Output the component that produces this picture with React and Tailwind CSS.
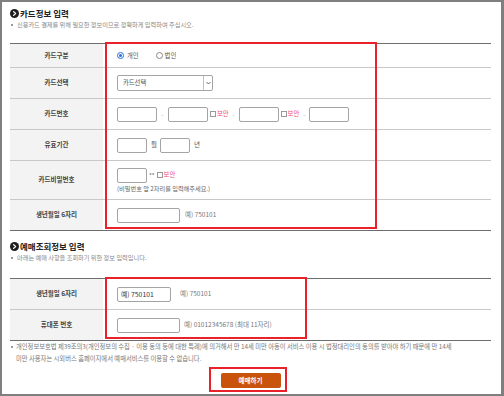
import React from "react";

const F = "font-['Noto_Sans_CJK_KR','Noto_Sans',sans-serif]";

function TitleIcon() {
  return (
    <svg width="9" height="9" viewBox="0 0 9 9" className="shrink-0">
      <circle cx="4.5" cy="4.5" r="4.5" fill="#1e1e1e" />
      <path d="M3.6 2.6 L5.6 4.5 L3.6 6.4" stroke="#fff" strokeWidth="1.3" fill="none" strokeLinecap="round" strokeLinejoin="round" />
    </svg>
  );
}

function Section({ title, sub }) {
  return (
    <>
      <div className="flex items-center h-[12px] gap-[1px]">
        <TitleIcon />
        <span className="text-[8.5px] leading-[12px] font-bold text-[#222]">{title}</span>
      </div>
      <div className="flex items-center h-[12px] text-[6.2px] leading-[12px] text-[#888]">
        <span className="w-[2px] h-[2px] bg-[#999] ml-[1px] mr-[4px]" />
        <span>{sub}</span>
      </div>
    </>
  );
}

function Row({ label, h, last, children }) {
  return (
    <div className={`flex ${last ? "" : "border-b border-[#c8c8c8]"}`} style={{ height: h }}>
      <div className="w-[93px] shrink-0 bg-[#f3f3f3] flex items-center justify-center text-[6.5px] font-bold text-[#444]">
        {label}
      </div>
      <div className="flex-1 pl-[14px] flex items-center text-[6.5px] text-[#555]">{children}</div>
    </div>
  );
}

function Input({ w, children }) {
  return (
    <div
      className="h-[15px] border border-[#a4a4a4] rounded-[2px] bg-white flex items-center pl-[3px] text-[6.8px] text-[#333] shrink-0"
      style={{ width: w }}
    >
      {children}
    </div>
  );
}

function Secure() {
  return (
    <span className="flex items-center ml-[2px]">
      <span className="w-[6px] h-[6px] border border-[#999] bg-white mr-[1px]" />
      <span className="text-[#f04a78] text-[6.3px]">보안</span>
    </span>
  );
}

export default function App() {
  return (
    <div className={`relative w-[504px] h-[396px] bg-white border-t-2 border-l-2 border-b-2 border-r-[3px] border-[#7f7f7f] ${F}`}>
      <div className="pl-[8px] pr-[10px] pt-[5px]">
        <Section title="카드정보 입력" sub="신용카드 결제를 위해 필요한 정보이므로 정확하게 입력하여 주십시오." />

        <div className="mt-[12px] border-t border-b border-[#6e6e6e]">
          <Row label="카드구분" h={24}>
            <span className="w-[7px] h-[7px] rounded-full border border-[#2a6ad8] flex items-center justify-center">
              <span className="w-[3px] h-[3px] rounded-full bg-[#2a6ad8]" />
            </span>
            <span className="ml-[3px] text-[6.3px]">개인</span>
            <span className="ml-[17px] w-[7px] h-[7px] rounded-full border border-[#888]" />
            <span className="ml-[2px] text-[6.3px]">법인</span>
          </Row>
          <Row label="카드선택" h={31}>
            <div className="w-[96px] h-[16px] border border-[#a4a4a4] rounded-[2px] flex items-stretch">
              <span className="flex-1 flex items-center pl-[5px] text-[6.3px] text-[#555]">카드선택</span>
              <span className="w-[9px] border-l border-[#c0c0c0] flex items-center justify-center">
                <svg width="5" height="4" viewBox="0 0 5 4">
                  <path d="M0.5 1 L2.5 3 L4.5 1" stroke="#555" strokeWidth="0.9" fill="none" />
                </svg>
              </span>
            </div>
          </Row>
          <Row label="카드번호" h={31}>
            <Input w={40} />
            <span className="w-[11px] text-center text-[#999] text-[6px]">-</span>
            <Input w={40} />
            <Secure />
            <span className="w-[10px] text-center text-[#999] text-[6px]">-</span>
            <Input w={40} />
            <Secure />
            <span className="w-[10px] text-center text-[#999] text-[6px]">-</span>
            <Input w={40} />
          </Row>
          <Row label="유효기간" h={31}>
            <Input w={30} />
            <span className="ml-[4px] w-[9px]">월</span>
            <Input w={30} />
            <span className="ml-[4px]">년</span>
          </Row>
          <Row label="카드비밀번호" h={39}>
            <div className="flex flex-col">
              <div className="flex items-center">
                <Input w={30} />
                <span className="ml-[2px] text-[6px] text-[#666]">**</span>
                <Secure />
              </div>
              <div className="text-[6.2px] leading-[9px] mt-[1px] text-[#666]">(비밀번호 앞 2자리를 입력해주세요.)</div>
            </div>
          </Row>
          <Row label="생년월일 6자리" h={30} last>
            <Input w={63} />
            <span className="ml-[5px] text-[#777]">예) 750101</span>
          </Row>
        </div>

        <div className="mt-[9px]">
          <Section title="예매조회정보 입력" sub="아래는 예매 사항을 조회하기 위한 정보 입력입니다." />
        </div>

        <div className="mt-[14px] border-t border-b border-[#6e6e6e]">
          <Row label="생년월일 6자리" h={31}>
            <Input w={54}>예) 750101</Input>
            <span className="ml-[9px] text-[#777]">예) 750101</span>
          </Row>
          <Row label="휴대폰 번호" h={30} last>
            <Input w={63} />
            <span className="ml-[4px] text-[#777]">예) 01012345678 (최대 11자리)</span>
          </Row>
        </div>

        <div className="flex text-[6.3px] leading-[12px] text-[#777] whitespace-nowrap">
          <span className="w-[2px] h-[2px] bg-[#999] ml-[1px] mr-[3px] mt-[5px] shrink-0" />
          <span>
            개인정보보호법 제39조의3(개인정보의 수집 · 이용 동의 등에 대한 특례)에 의거해서 만 14세 미만 아동이 서비스 이용 시 법정대리인의 동의를 받아야 하기 때문에 만 14세
            <br />
            미만 사용자는 시외버스 홈페이지에서 예매서비스를 이용할 수 없습니다.
          </span>
        </div>

        <div className="flex justify-center mt-[8px]">
          <button className="w-[60px] h-[15px] rounded-[2px] bg-[#c9520c] text-white text-[6.5px] font-bold flex items-center justify-center">
            예매하기
          </button>
        </div>
      </div>

      <div className="absolute left-[103px] top-[40px] w-[272px] h-[187px] border-2 border-[#e8212a] pointer-events-none" />
      <div className="absolute left-[103px] top-[275px] w-[202px] h-[62px] border-2 border-[#e8212a] pointer-events-none" />
      <div className="absolute left-[207px] top-[365px] w-[78px] h-[25px] border-2 border-[#e8212a] pointer-events-none" />
    </div>
  );
}
